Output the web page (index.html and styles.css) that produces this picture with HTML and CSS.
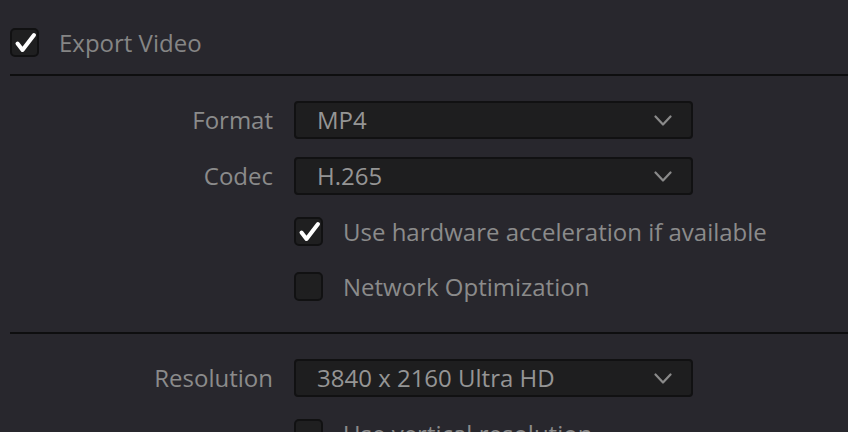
FILE: index.html
```html
<!DOCTYPE html>
<html lang="en">
<head>
<meta charset="utf-8">
<title>Export Video</title>
<link rel="stylesheet" href="styles.css">
</head>
<body>
<div class="panel">
  <div class="head">
    <span class="box checked">
      <svg class="tick" viewBox="0 0 29 29" width="29" height="29"><path d="M7.5 15.5 L12.5 22 L24 7" /></svg>
    </span>
    <span class="head-label">Export Video</span>
  </div>
  <div class="rule"></div>

  <div class="form">
    <div class="label">Format</div>
    <div class="select"><span>MP4</span><svg class="chev" viewBox="0 0 18 11" width="18" height="11"><path d="M1.5 1.5 L9 9.5 L16.5 1.5"/></svg></div>

    <div class="label">Codec</div>
    <div class="select"><span>H.265</span><svg class="chev" viewBox="0 0 18 11" width="18" height="11"><path d="M1.5 1.5 L9 9.5 L16.5 1.5"/></svg></div>

    <div class="label"></div>
    <div class="check-row">
      <span class="box checked"><svg class="tick" viewBox="0 0 29 29" width="29" height="29"><path d="M7.5 15.5 L12.5 22 L24 7" /></svg></span>
      <span class="opt">Use hardware acceleration if available</span>
    </div>

    <div class="label"></div>
    <div class="check-row">
      <span class="box"></span>
      <span class="opt">Network Optimization</span>
    </div>
  </div>
  <div class="rule"></div>

  <div class="form">
    <div class="label">Resolution</div>
    <div class="select"><span>3840 x 2160 Ultra HD</span><svg class="chev" viewBox="0 0 18 11" width="18" height="11"><path d="M1.5 1.5 L9 9.5 L16.5 1.5"/></svg></div>

    <div class="label"></div>
    <div class="check-row">
      <span class="box"></span>
      <span class="opt">Use vertical resolution</span>
    </div>
  </div>
</div>
</body>
</html>
```
FILE: styles.css
```css
html, body {
  margin: 0;
  padding: 0;
  background: #28272d;
  height: 100%;
  overflow: hidden;
}

.panel {
  font-family: "Open Sans", "Noto Sans", "DejaVu Sans", sans-serif;
  font-size: 24px;
  color: #8b8b8b;
}

.head {
  display: flex;
  align-items: center;
  gap: 20px;
  padding: 28px 0 17px 10px;
  height: 29px;
}

.head-label {
  color: #858585;
  line-height: 29px;
}

.rule {
  margin-left: 10px;
  height: 2px;
  background: #0e0e0f;
}

.form {
  display: grid;
  grid-template-columns: 263px 399px;
  grid-auto-rows: auto;
  column-gap: 21px;
  row-gap: 18px;
  padding: 25px 0 27px 10px;
}

.label {
  text-align: right;
  align-self: center;
  line-height: 30px;
  color: #8b8b8b;
}

.select {
  height: 38px;
  box-sizing: border-box;
  border: 2px solid #111112;
  border-radius: 4px;
  background: #1e1e1f;
  display: flex;
  align-items: center;
  justify-content: space-between;
  padding: 0 19px 0 21px;
  color: #959595;
}

.select span {
  line-height: 30px;
}

.chev path {
  fill: none;
  stroke: #8a8a8a;
  stroke-width: 2.2;
  stroke-linecap: round;
  stroke-linejoin: round;
}

.check-row {
  height: 37px;
  display: flex;
  align-items: center;
  gap: 20px;
}

.box {
  flex: none;
  width: 29px;
  height: 29px;
  box-sizing: border-box;
  border: 2px solid #111112;
  border-radius: 5px;
  background: #1f1f20;
  position: relative;
}

.box .tick {
  position: absolute;
  left: -2px;
  top: -2px;
}

.tick path {
  fill: none;
  stroke: #ffffff;
  stroke-width: 4;
  stroke-linecap: round;
  stroke-linejoin: round;
}

.opt {
  line-height: 30px;
  color: #8b8b8b;
  white-space: nowrap;
}
```
